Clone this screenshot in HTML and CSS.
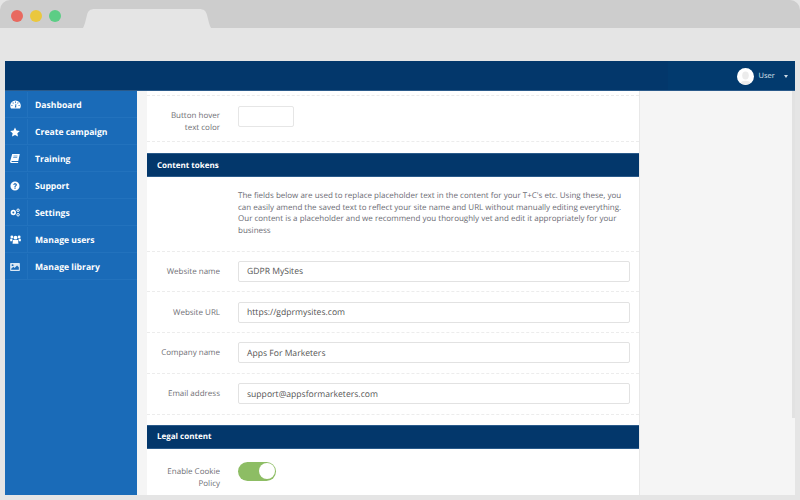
FILE: index.html
```html
<!DOCTYPE html>
<html lang="en">
<head>
<meta charset="utf-8">
<title>GDPR MySites</title>
<link rel="stylesheet" href="styles.css">
</head>
<body>
<div class="chrome">
  <span class="dot dot-red"></span><span class="dot dot-yellow"></span><span class="dot dot-green"></span>
  <svg class="tab" width="132" height="20" viewBox="0 0 132 20"><path d="M0 20C2 20 3 17 4 14L6 6C7 2 9 0 14 0H118C123 0 125 2 126 6L128 14C129 17 130 20 132 20Z" fill="#e5e5e5"/></svg>
</div>
<div class="toolbar"></div>
<div class="window">
  <header class="topbar">
    <div class="user">
      <svg class="avatar" width="17" height="17" viewBox="0 0 17 17"><circle cx="8.500" cy="8.500" r="8.500" fill="#fff"/><ellipse cx="8.500" cy="7.500" rx="3.300" ry="4" fill="#ececec"/><path d="M3.500 15C4.500 12 12.500 12 13.500 15C11 17.300 6 17.300 3.500 15Z" fill="#ececec"/></svg>
      <span class="user-name">User</span>
      <span class="caret"></span>
    </div>
  </header>
  <div class="body">
    <nav class="sidebar">
      <a class="nav-item"><span class="nav-icon"><svg width="11" height="9" viewBox="0 0 11 9"><path d="M5.500 .5A5.300 5.300 0 0 0 .2 5.800C.2 6.800.5 7.700 1 8.500H10C10.500 7.700 10.800 6.800 10.800 5.800A5.300 5.300 0 0 0 5.500 .5ZM5 1.500H6V2.700H5ZM2.400 2.700L3.200 2.200L3.800 3.200L3 3.700ZM1.300 5.200H2.500V6.100H1.300ZM8.500 5.200H9.700V6.100H8.500ZM7.800 2.200L8.600 2.700L8 3.700L7.200 3.200ZM4.800 7.600L5.700 3.800L6.300 3.900L6.200 7.600Z" fill="#fff" fill-rule="evenodd"/></svg></span><span>Dashboard</span></a>
      <a class="nav-item"><span class="nav-icon"><svg width="10" height="10" viewBox="0 0 11 11"><path d="M5.500 .5L7.100 3.800L10.800 4.300L8.100 6.900L8.800 10.500L5.500 8.800L2.200 10.500L2.900 6.900L.2 4.300L3.900 3.800Z" fill="#fff"/></svg></span><span>Create campaign</span></a>
      <a class="nav-item"><span class="nav-icon"><svg width="10" height="9" viewBox="0 0 10 9"><path d="M2.200 0H9.800L8.300 7H1.900C1.300 7 1.300 8 1.900 8H8.300L8 9H1.300C.3 9-.1 8.300.1 7.400Z" fill="#fff"/><path d="M3.500 2H7.500M3.200 3.500H7.200" stroke="#1a6bb8" stroke-width=".6"/></svg></span><span>Training</span></a>
      <a class="nav-item"><span class="nav-icon"><svg width="10" height="10" viewBox="0 0 11 11"><path d="M5.500 .5A5 5 0 1 0 5.500 10.500A5 5 0 1 0 5.500 .5ZM4.800 7.200H6.200V8.600H4.800ZM3.500 4.200C3.700 3.100 4.500 2.500 5.600 2.500C6.800 2.500 7.600 3.200 7.600 4.200C7.600 5.500 6.200 5.500 6.200 6.600H4.800C4.800 5 6.200 5 6.200 4.300C6.200 3.900 6 3.700 5.500 3.700C5.100 3.700 4.900 4 4.800 4.400Z" fill="#fff" fill-rule="evenodd"/></svg></span><span>Support</span></a>
      <a class="nav-item"><span class="nav-icon"><svg width="10" height="9" viewBox="0 0 12 10"><path d="M4 1.800A3.200 3.200 0 1 0 4 8.200A3.200 3.200 0 1 0 4 1.800ZM4 3.800A1.200 1.200 0 1 1 4 6.200A1.200 1.200 0 1 1 4 3.800Z" fill="#fff" fill-rule="evenodd"/><circle cx="9.700" cy="2.300" r="1.500" fill="none" stroke="#fff" stroke-width="1.200"/><circle cx="9.700" cy="7.700" r="1.500" fill="none" stroke="#fff" stroke-width="1.200"/></svg></span><span>Settings</span></a>
      <a class="nav-item"><span class="nav-icon"><svg width="11" height="9" viewBox="0 0 13 10"><circle cx="6.500" cy="2.800" r="2.300" fill="#fff"/><circle cx="2.200" cy="2" r="1.700" fill="#fff"/><circle cx="10.800" cy="2" r="1.700" fill="#fff"/><path d="M3.500 5.500H9.500L10 10H3Z" fill="#fff"/><path d="M.2 4H2.800V7H.2ZM10.200 4H12.800V7H10.200Z" fill="#fff"/></svg></span><span>Manage users</span></a>
      <a class="nav-item"><span class="nav-icon"><svg width="10" height="8" viewBox="0 0 11 9"><rect width="11" height="9" rx=".8" fill="#d9e7f4"/><path d="M1.200 7.700V6.500L3.700 4.300L5 5.500L7.800 2.800L9.800 4.800V7.700Z" fill="#1a6bb8"/><circle cx="2.800" cy="2.400" r="1.100" fill="#1a6bb8"/></svg></span><span>Manage library</span></a>
    </nav>
    <main class="content">
      <section class="panel">
        <div class="row row-top">
          <label class="label">Button hover<br>text color</label>
          <div class="swatch"></div>
        </div>
        <h2 class="band">Content tokens</h2>
        <div class="row row-intro">
          <p class="intro">The fields below are used to replace placeholder text in the content for your T+C's etc. Using these, you can easily amend the saved text to reflect your site name and URL without manually editing everything. Our content is a placeholder and we recommend you thoroughly vet and edit it appropriately for your business</p>
        </div>
        <div class="row row-field"><label class="label">Website name</label><div class="input">GDPR MySites</div></div>
        <div class="row row-field"><label class="label">Website URL</label><div class="input">https://gdprmysites.com</div></div>
        <div class="row row-field"><label class="label">Company name</label><div class="input">Apps For Marketers</div></div>
        <div class="row row-field"><label class="label">Email address</label><div class="input">support@appsformarketers.com</div></div>
        <h2 class="band band-legal">Legal content</h2>
        <div class="row row-toggle">
          <label class="label">Enable Cookie<br>Policy</label>
          <div class="toggle"><span class="knob"></span></div>
        </div>
      </section>
      <aside class="rail"><div class="scrollbar"></div></aside>
    </main>
  </div>
</div>
</body>
</html>
```

FILE: styles.css
```css
* { box-sizing: border-box; }
html, body { margin: 0; height: 100%; }
body {
  width: 800px;
  height: 500px;
  overflow: hidden;
  background: #e5e5e5;
  font-family: "Open Sans", sans-serif;
  text-rendering: geometricPrecision;
  display: flex;
  flex-direction: column;
}
.chrome {
  height: 28px;
  flex: none;
  background: #cdcdcd;
  border-radius: 10px 10px 0 0;
  display: flex;
  align-items: flex-start;
  padding: 9.500px 0 0 11px;
  gap: 7px;
}
.dot { width: 12px; height: 12px; border-radius: 50%; flex: none; }
.dot-red { background: #e8695f; }
.dot-yellow { background: #eac73e; }
.dot-green { background: #5ccd85; }
.tab { margin: -.5px 0 0 13px; flex: none; }
.toolbar { height: 33px; flex: none; }
.window {
  height: 434px;
  flex: none;
  margin: 0 5px;
  display: flex;
  flex-direction: column;
}
.topbar {
  height: 30px;
  flex: none;
  background: #03376b;
  display: flex;
  justify-content: flex-end;
  box-shadow: inset 0 -1px 0 #2a5a8a;
}
.user {
  width: 127px;
  background: #023a6e;
  box-shadow: inset 0 -1px 0 #2a5a8a;
  display: flex;
  align-items: center;
  padding-left: 68.500px;
  color: #dfe7ef;
  font-size: 7.500px;
}
.avatar { flex: none; margin-right: 5px; }
.user-name { margin-right: 9.500px; }
.caret {
  border-left: 2.500px solid transparent;
  border-right: 2.500px solid transparent;
  border-top: 3px solid #cfdbe6;
}
.body { flex: 1; display: flex; min-height: 0; }
.sidebar {
  width: 132px;
  flex: none;
  background: #1a6bb8;
}
.nav-item {
  height: 27px;
  display: flex;
  align-items: center;
  color: #fff;
  font-size: 8.600px;
  font-weight: 700;
  border-bottom: 1px solid #2272bd;
  padding-top: 1px;
}
.nav-icon {
  width: 23px;
  height: 100%;
  margin-right: 7px;
  display: flex;
  align-items: center;
  justify-content: center;
  border-right: 1px solid #2272bd;
  padding-right: 2px;
}
.content {
  flex: 1;
  display: flex;
  background: #f5f5f5;
  padding-left: 10px;
  min-width: 0;
}
.panel {
  width: 493px;
  flex: none;
  background: #fff;
  border-right: 1px solid #e8e8e8;
}
.rail { flex: 1; display: flex; justify-content: flex-end; }
.scrollbar { width: 3px; height: 327px; background: #e2e2e2; }
.row {
  display: flex;
  gap: 18px;
  padding-right: 9px;
  border-bottom: 1px dashed #ececec;
}
.label {
  width: 73px;
  flex: none;
  text-align: right;
  font-size: 8px;
  line-height: 12px;
  color: #6f6f75;
}
.row-top {
  height: 47px;
  margin-top: 4px;
  margin-bottom: 11px;
  padding-top: 10px;
  border-top: 1px dashed #ececec;
}
.row-top .label { padding-top: 4px; }
.swatch {
  width: 56px;
  height: 21px;
  border: 1px solid #e6e6e6;
  border-radius: 2px;
}
.band {
  margin: 0;
  height: 24px;
  padding-left: 10px;
  background: #03376b;
  color: #fff;
  font-size: 8px;
  font-weight: 700;
  display: flex;
  align-items: center;
  box-shadow: inset 0 1px 0 #2a5a8a, inset 0 -1px 0 #2a5a8a;
}
.band-legal { margin-top: 10px; }
.row-intro { height: 74.500px; padding: 13px 9px 0 91px; }
.intro {
  margin: 0;
  font-size: 8px;
  line-height: 11.500px;
  color: #6c6c74;
}
.row-field { height: 40.750px; align-items: center; }
.row-field .label { padding-top: 1px; }
.input {
  flex: 1;
  height: 21px;
  border: 1px solid #e2e2e2;
  border-radius: 2px;
  padding-left: 8px;
  display: flex;
  align-items: center;
  font-size: 8.600px;
  color: #555;
}
.row-toggle { border-bottom: 0; padding-top: 13px; }
.row-toggle .label { padding-top: 4px; }
.toggle {
  width: 38px;
  height: 19px;
  border-radius: 10px;
  background: #8dbd64;
  display: flex;
  justify-content: flex-end;
  padding: 1.500px;
}
.knob { width: 16px; height: 16px; border-radius: 50%; background: #fff; }
```
